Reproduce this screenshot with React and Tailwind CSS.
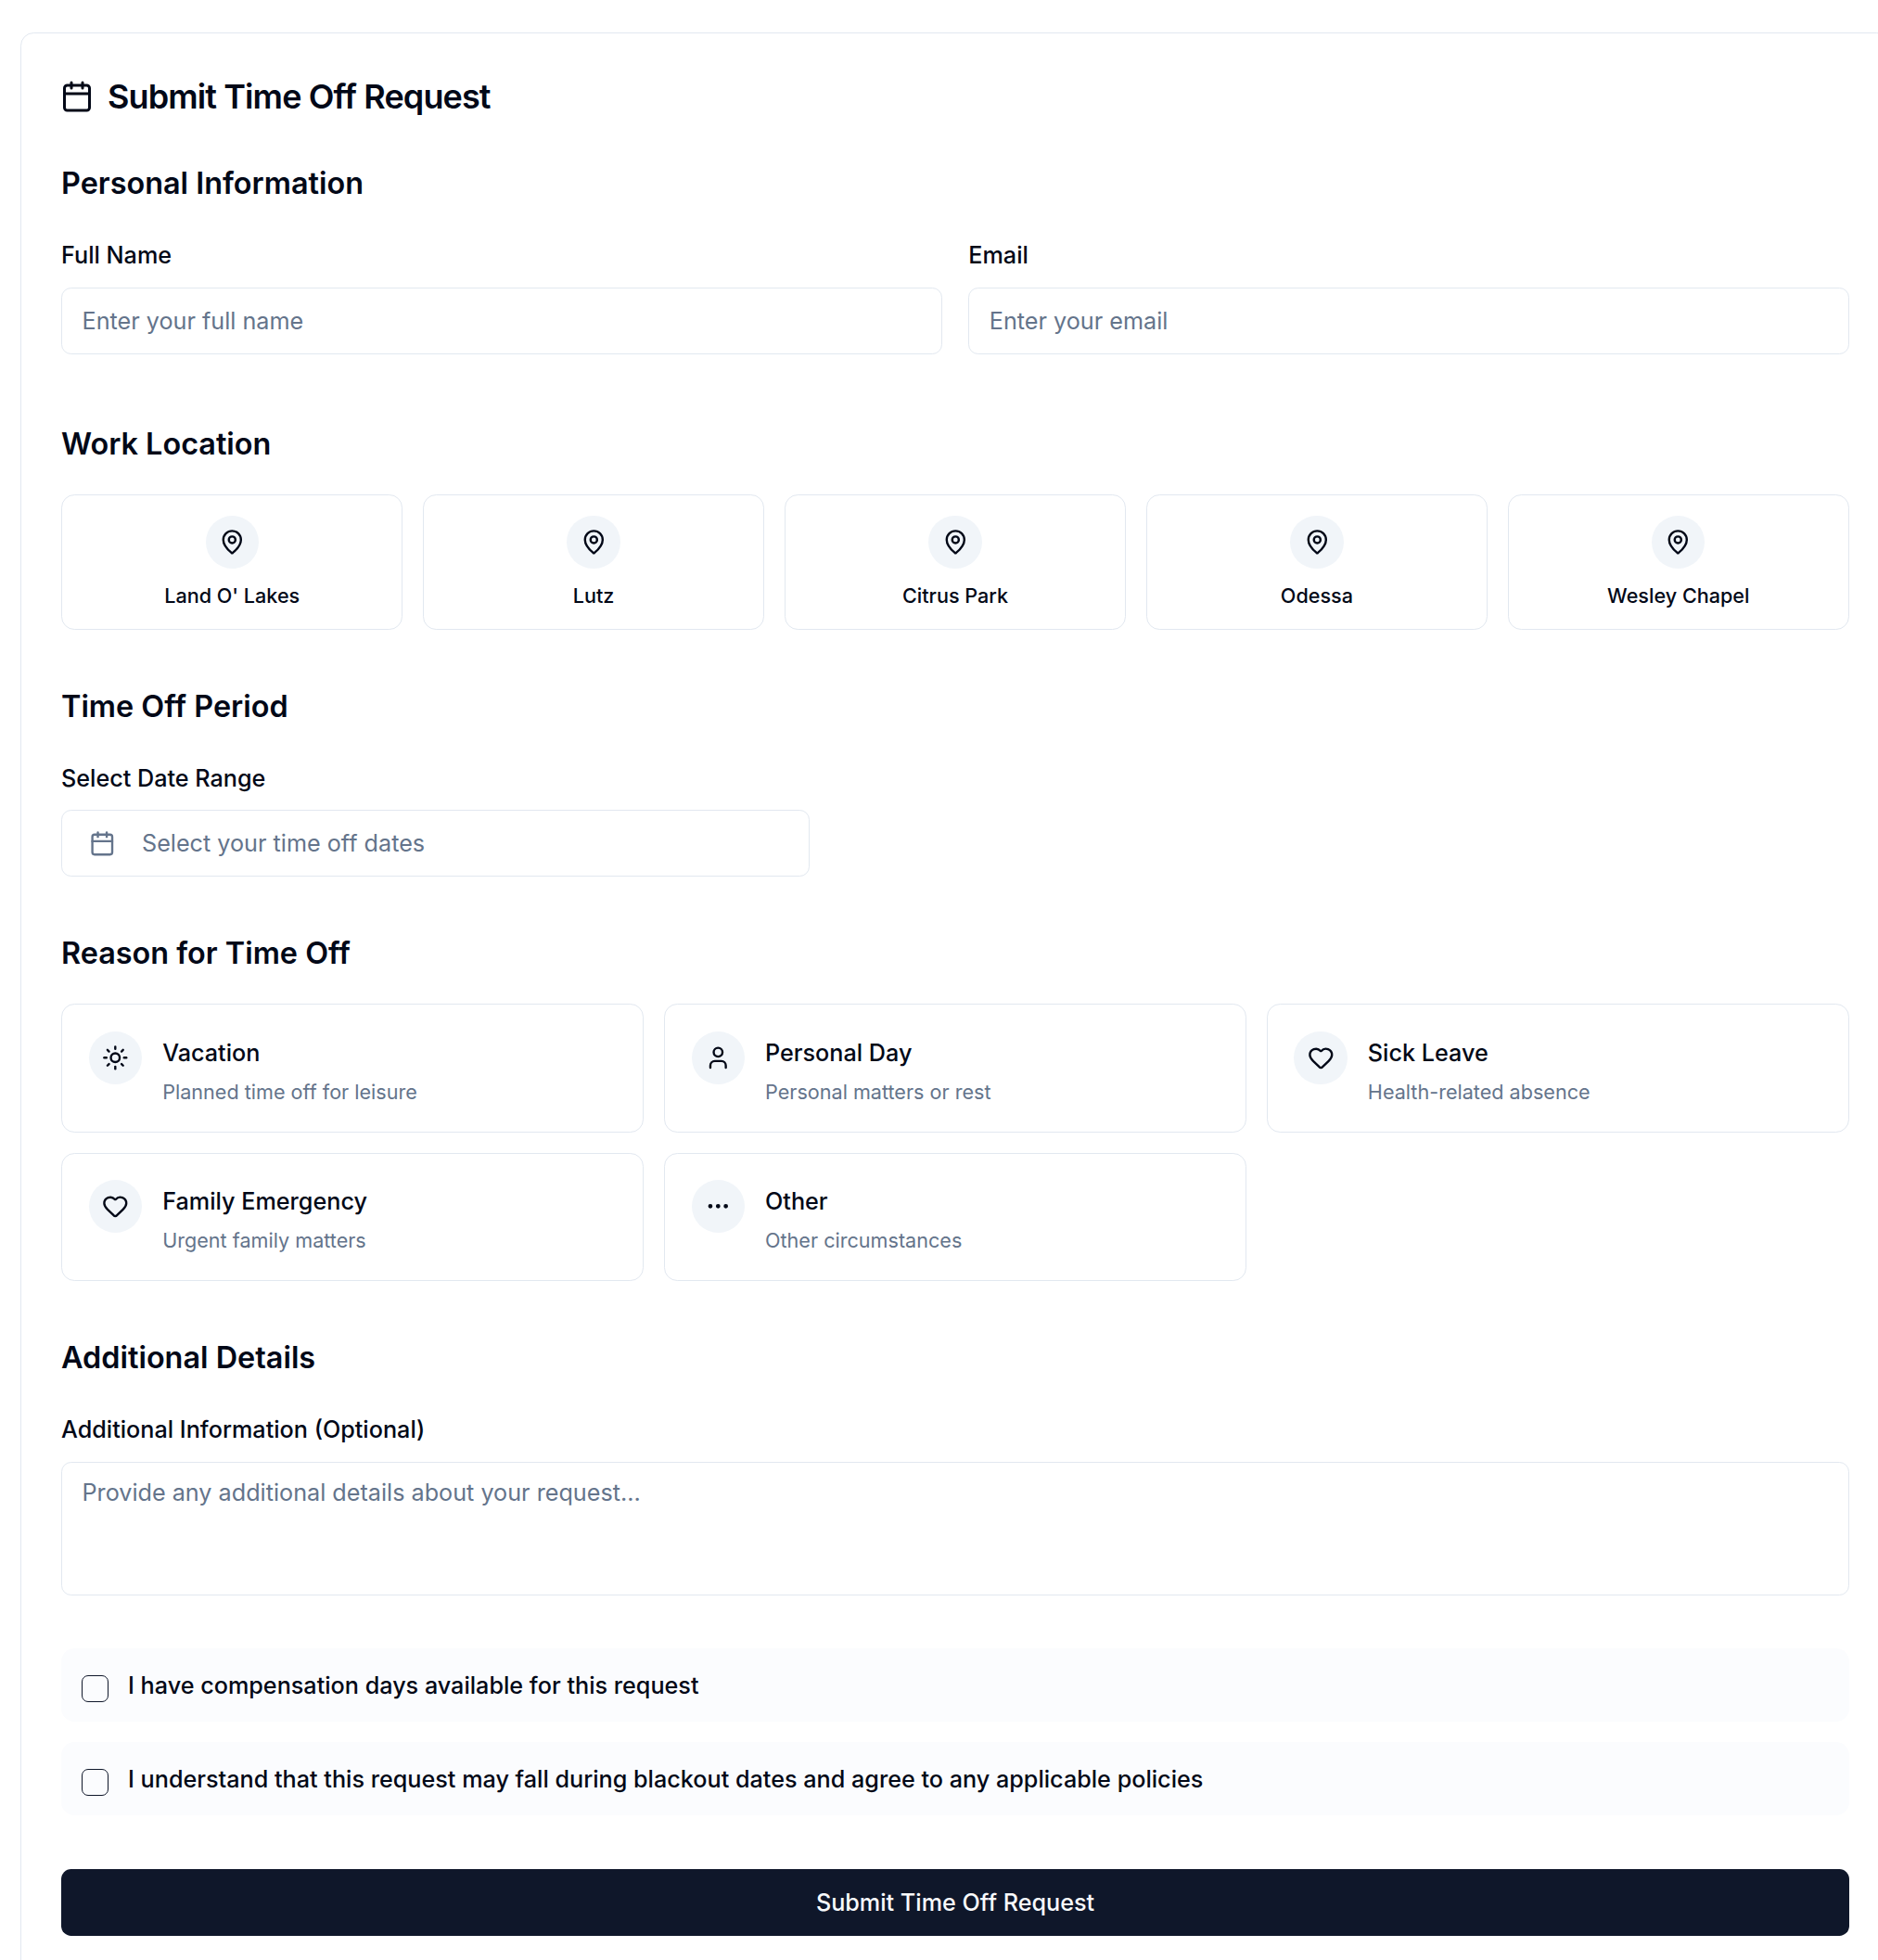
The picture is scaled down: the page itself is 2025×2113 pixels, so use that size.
import React from "react";
import { Calendar, Ellipsis, Heart, MapPin, Sun, User } from "lucide-react";

const locations = ["Land O' Lakes", "Lutz", "Citrus Park", "Odessa", "Wesley Chapel"];

const reasons = [
  { title: "Vacation", text: "Planned time off for leisure", Icon: Sun },
  { title: "Personal Day", text: "Personal matters or rest", Icon: User },
  { title: "Sick Leave", text: "Health-related absence", Icon: Heart },
  { title: "Family Emergency", text: "Urgent family matters", Icon: Heart },
  { title: "Other", text: "Other circumstances", Icon: Ellipsis },
];

const agreements = [
  "I have compensation days available for this request",
  "I understand that this request may fall during blackout dates and agree to any applicable policies",
];

function Heading({ children }) {
  return <h3 className="pt-0.5 text-[32.4px] font-semibold leading-[48px]">{children}</h3>;
}

function Label({ children }) {
  return <label className="mt-10 block pt-0.5 text-[25.2px] font-medium leading-[23px]">{children}</label>;
}

function IconCircle({ Icon }) {
  return (
    <span className="flex size-[57.4px] shrink-0 items-center justify-center rounded-full bg-slate-100">
      <Icon className="size-[28.6px]" strokeWidth={2} />
    </span>
  );
}

function TextField({ label, placeholder }) {
  return (
    <div>
      <Label>{label}</Label>
      <input
        className="mt-[23px] block h-[72px] w-full rounded-[10.7px] border border-[#e2e8f0] bg-white px-[21.5px] text-[25.2px] placeholder:text-[#64748b]"
        placeholder={placeholder}
      />
    </div>
  );
}

export default function App() {
  return (
    <div className="h-[2113px] w-full overflow-hidden bg-white pl-[22px] pt-[35px] font-['Inter',sans-serif] text-[#020817] antialiased">
      <main className="h-[2150px] w-[2016px] rounded-[14.3px] border border-[#e2e8f0] px-[43px] pt-[50px]">
        <div className="flex h-9 items-center gap-[15px]">
          <Calendar className="-ml-px size-9" />
          <h2 className="text-[36px] font-semibold leading-9 tracking-tight">Submit Time Off Request</h2>
        </div>

        <section className="mt-[50px]">
          <Heading>Personal Information</Heading>
          <div className="grid grid-cols-2 gap-[28.6px]">
            <TextField label="Full Name" placeholder="Enter your full name" />
            <TextField label="Email" placeholder="Enter your email" />
          </div>
        </section>

        <section className="mt-[71px]">
          <Heading>Work Location</Heading>
          <div className="mt-[30px] grid grid-cols-5 gap-[21.5px]">
            {locations.map((name) => (
              <button
                key={name}
                className="flex h-[146px] flex-col items-center gap-[15.2px] rounded-[14.3px] border border-[#e2e8f0] pt-[21.5px]"
              >
                <IconCircle Icon={MapPin} />
                <span className="text-[21.6px] font-medium leading-[28.6px]">{name}</span>
              </button>
            ))}
          </div>
        </section>

        <section className="mt-[57px]">
          <Heading>Time Off Period</Heading>
          <Label>Select Date Range</Label>
          <button className="mt-[22px] flex h-[72px] w-[807px] items-center gap-[28.8px] rounded-[10.7px] border border-[#e2e8f0] px-[28.6px] text-[25.2px] text-[#64748b]">
            <Calendar className="size-[28.6px]" />
            <span className="pt-0.5">Select your time off dates</span>
          </button>
        </section>

        <section className="mt-[57px]">
          <Heading>Reason for Time Off</Heading>
          <div className="mt-[30px] grid grid-cols-3 grid-rows-[139px_138px] gap-x-[21.5px] gap-y-[22px]">
            {reasons.map(({ title, text, Icon }) => (
              <button
                key={title}
                className="flex items-start gap-[22px] rounded-[14.3px] border border-[#e2e8f0] px-[28.8px] pt-[28.6px] text-left [&:nth-child(n+4)]:pt-[28px]"
              >
                <IconCircle Icon={Icon} />
                <span className="flex flex-col gap-[9.4px] pt-[6px]">
                  <span className="text-[25.2px] font-medium leading-[35.8px]">{title}</span>
                  <span className="text-[21.6px] leading-[28.6px] text-[#64748b]">{text}</span>
                </span>
              </button>
            ))}
          </div>
        </section>

        <section className="mt-[57px]">
          <Heading>Additional Details</Heading>
          <Label>Additional Information (Optional)</Label>
          <textarea
            className="mt-[23px] block h-[144px] w-full resize-none rounded-[10.7px] border border-[#e2e8f0] bg-white px-[21.5px] py-[15.3px] text-[25.2px] leading-[35.8px] placeholder:text-[#64748b]"
            placeholder="Provide any additional details about your request..."
          />
        </section>

        <div className="mt-[57px] flex flex-col gap-[22px]">
          {agreements.map((text) => (
            <label
              key={text}
              className="flex h-[79px] items-start gap-[21.5px] rounded-[14.3px] bg-[#fbfcfe] px-[21.5px] pt-[22.5px]"
            >
              <input
                type="checkbox"
                className="mt-[6.2px] size-[29px] shrink-0 appearance-none rounded-[7px] border border-[#0f172a]"
              />
              <span className="text-[25.2px] font-medium leading-[35.8px]">{text}</span>
            </label>
          ))}
        </div>

        <button className="mt-[58px] block h-[72px] w-full rounded-[10.7px] bg-[#0f172a] pt-0.5 text-[25.2px] font-medium text-[#f8fafc]">
          Submit Time Off Request
        </button>
      </main>
    </div>
  );
}
